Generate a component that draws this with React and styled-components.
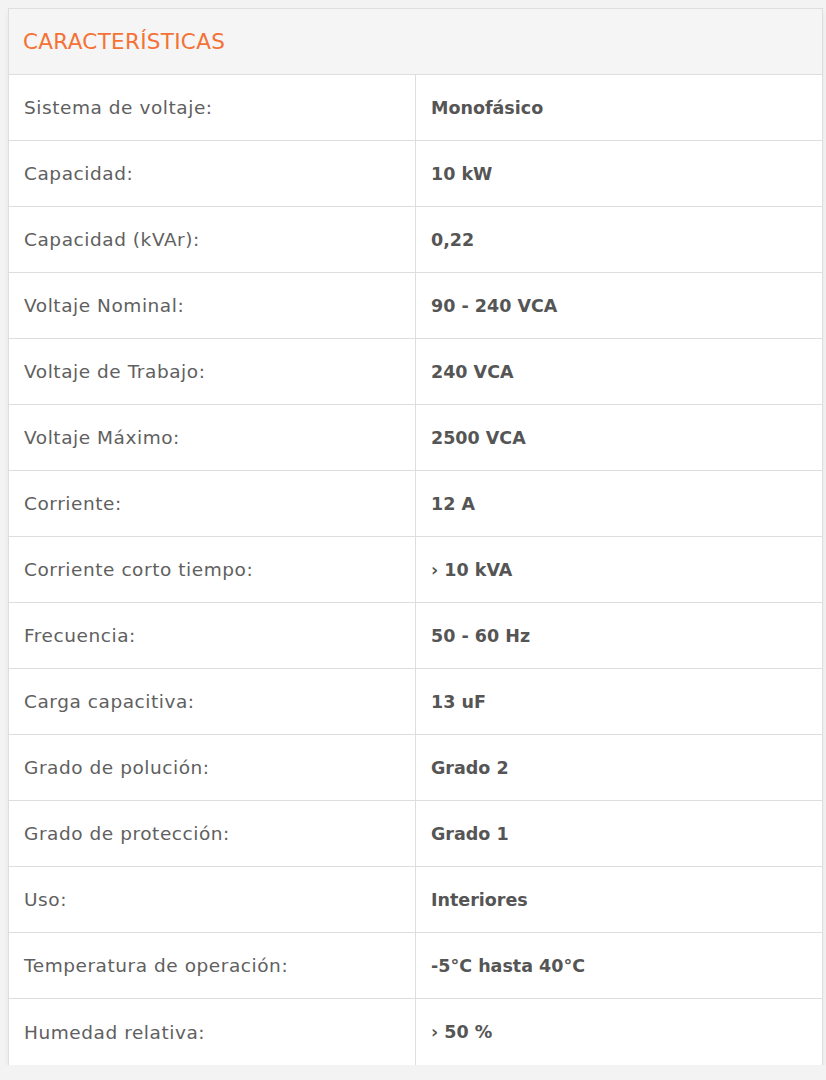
import React from "react";
import styled, { createGlobalStyle } from "styled-components";

const Global = createGlobalStyle`
  html, body { margin: 0; padding: 0; background: #f3f3f3; }
  body { padding: 8px 3px 0 8px; font-family: "DejaVu Sans", "Noto Sans", sans-serif; }
`;

const Panel = styled.section`
  width: 815px;
  background: #fff;
  border: 1px solid #dedede;
  border-bottom: none;
  box-sizing: border-box;
  box-shadow: 0 4px 6px rgba(0,0,0,0.06);
`;

const Header = styled.header`
  height: 65px;
  display: flex;
  align-items: center;
  padding: 0 14px;
  background: #f5f5f5;
  border-bottom: 1px solid #dedede;
  color: #f47236;
  font-size: 21.5px;
  font-weight: 400;
  letter-spacing: 0.3px;
`;

const Table = styled.div`
  display: grid;
  grid-template-columns: 407px 1fr;
`;

const Cell = styled.div`
  display: flex;
  align-items: center;
  padding: 0 15px;
  height: ${(p) => (p.$last ? "66px" : "65px")};
  border-bottom: ${(p) => (p.$last ? "none" : "1px solid #dedede")};
  border-right: ${(p) => (p.$label ? "1px solid #dedede" : "none")};
  color: ${(p) => (p.$label ? "#606060" : "#555555")};
  font-size: ${(p) => (p.$label ? "18.5px" : "17.5px")};
  letter-spacing: ${(p) => (p.$label ? "0.55px" : "0")};
  font-weight: ${(p) => (p.$label ? 400 : 700)};
`;

const rows = [
  ["Sistema de voltaje:", "Monofásico"],
  ["Capacidad:", "10 kW"],
  ["Capacidad (kVAr):", "0,22"],
  ["Voltaje Nominal:", "90 - 240 VCA"],
  ["Voltaje de Trabajo:", "240 VCA"],
  ["Voltaje Máximo:", "2500 VCA"],
  ["Corriente:", "12 A"],
  ["Corriente corto tiempo:", "› 10 kVA"],
  ["Frecuencia:", "50 - 60 Hz"],
  ["Carga capacitiva:", "13 uF"],
  ["Grado de polución:", "Grado 2"],
  ["Grado de protección:", "Grado 1"],
  ["Uso:", "Interiores"],
  ["Temperatura de operación:", "-5°C hasta 40°C"],
  ["Humedad relativa:", "› 50 %"],
];

export default function App() {
  return (
    <>
      <Global />
      <Panel>
        <Header>CARACTERÍSTICAS</Header>
        <Table>
          {rows.map(([k, v], i) => {
            const last = i === rows.length - 1;
            return (
              <React.Fragment key={k}>
                <Cell $label $last={last}>{k}</Cell>
                <Cell $last={last}>{v}</Cell>
              </React.Fragment>
            );
          })}
        </Table>
      </Panel>
    </>
  );
}
